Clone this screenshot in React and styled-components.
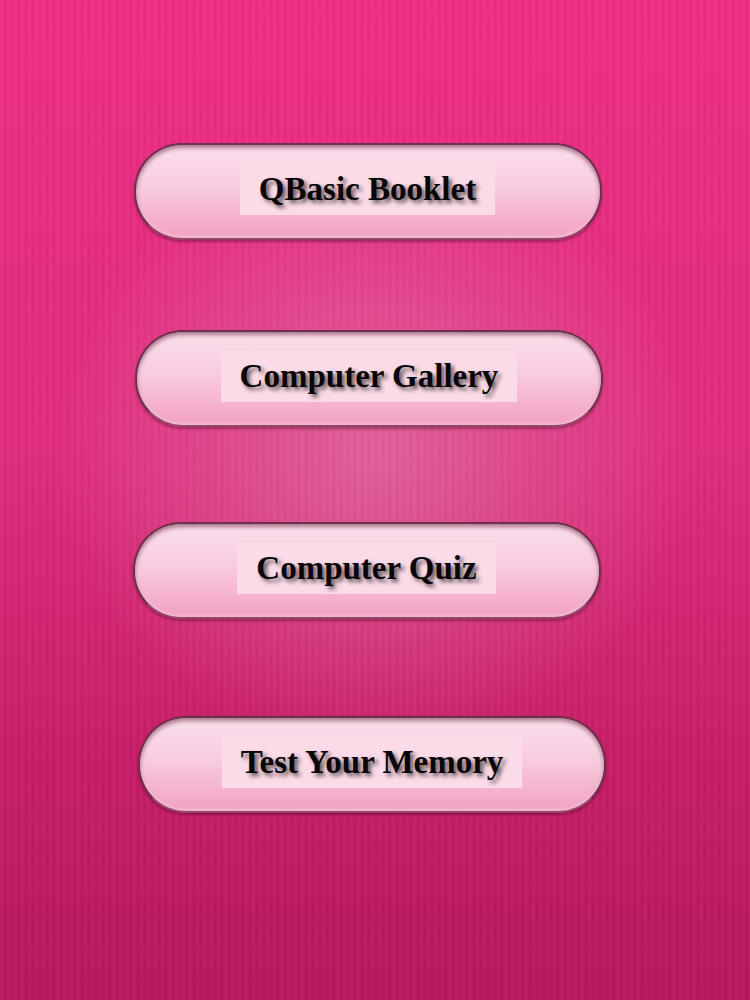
import React from "react";
import styled, { createGlobalStyle } from "styled-components";

const GlobalStyle = createGlobalStyle`
  html, body {
    margin: 0;
    padding: 0;
  }
  body {
    font-family: "Liberation Serif", "Times New Roman", serif;
  }
`;

const items = [
  { label: "QBasic Booklet", offset: -15, space: 0 },
  { label: "Computer Gallery", offset: -12, space: 90 },
  { label: "Computer Quiz", offset: -17, space: 95 },
  { label: "Test Your Memory", offset: -6, space: 97 },
];

export default function App() {
  return (
    <>
      <GlobalStyle />
      <Page>
        <Menu>
          {items.map((item) => (
            <MenuButton key={item.label} $offset={item.offset} $space={item.space}>
              <Label>{item.label}</Label>
            </MenuButton>
          ))}
        </Menu>
      </Page>
    </>
  );
}

const Page = styled.div`
  width: 750px;
  height: 1000px;
  box-sizing: border-box;
  padding-top: 143px;
  background:
    repeating-linear-gradient(
      90deg,
      rgba(255, 255, 255, 0.025) 0px,
      rgba(255, 255, 255, 0.025) 3px,
      rgba(0, 0, 0, 0.02) 3px,
      rgba(0, 0, 0, 0.02) 7px
    ),
    radial-gradient(
      ellipse 320px 300px at 50% 45%,
      rgba(225, 115, 165, 0.75),
      rgba(225, 115, 165, 0) 100%
    ),
    linear-gradient(180deg, #ef2e86 0%, #e02d7d 45%, #c81f68 75%, #b7195d 100%);
  overflow: hidden;
`;

const Menu = styled.div`
  display: flex;
  flex-direction: column;
  align-items: center;
`;

const MenuButton = styled.div`
  width: 468px;
  height: 97px;
  box-sizing: border-box;
  margin-top: ${(p) => p.$space}px;
  margin-left: ${(p) => p.$offset}px;
  border-radius: 48px;
  border: 2px solid #6e2f4c;
  border-bottom-color: #964468;
  background: linear-gradient(180deg, #fbdfeb 0%, #f8cce0 45%, #f4acca 85%, #f2a0c2 100%);
  box-shadow:
    inset 0 3px 4px rgba(90, 20, 50, 0.5),
    inset 0 -2px 3px rgba(255, 255, 255, 0.35),
    0 2px 3px rgba(60, 0, 30, 0.4);
  display: flex;
  align-items: center;
  justify-content: center;
  padding-bottom: 5px;
`;

const Label = styled.div`
  background: #fcdbe9;
  padding: 0 19px;
  height: 52px;
  display: flex;
  align-items: center;
  font-family: "Liberation Serif", "Times New Roman", serif;
  font-weight: bold;
  font-size: 33px;
  color: #0a0508;
  text-shadow: 3px 3px 4px rgba(0, 0, 0, 0.65);
  white-space: nowrap;
`;
